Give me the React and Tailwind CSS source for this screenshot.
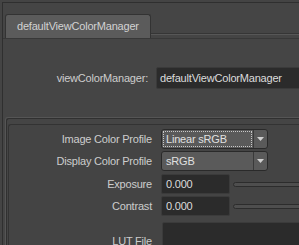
import React from 'react';

const font = { fontFamily: '"Liberation Sans", Arial, sans-serif' };

function Label({ children }) {
  return (
    <div className="w-[143px] shrink-0 pr-[0px] text-right text-[11px] tracking-[-0.2px] text-[#cdcdcd] leading-none">
      {children}
    </div>
  );
}

function Dropdown({ value, focused }) {
  return (
    <div className="ml-[9px] flex h-[20px] w-[107px] shrink-0 items-stretch rounded-[3px] border border-[#2a2a2a] bg-[#5a5a5a]">
      <div className="flex flex-1 items-center p-[1px]">
        <div
          className={
            'flex h-full w-full items-center pl-[2px] text-[11px] tracking-[-0.2px] text-[#e0e0e0] ' +
            (focused ? 'border border-dotted border-[#c8c8c8]' : 'border border-transparent')
          }
        >
          {value}
        </div>
      </div>
      <div className="w-[1px] bg-[#3a3a3a]" />
      <div className="flex w-[13px] items-center justify-center">
        <svg width="7" height="4" viewBox="0 0 7 4">
          <path d="M0 0 H7 L3.5 4 Z" fill="#cfcfcf" />
        </svg>
      </div>
    </div>
  );
}

function NumberField({ value }) {
  return (
    <div className="ml-[9px] flex shrink-0 items-center">
      <div className="flex h-[20px] w-[69px] items-center rounded-[2px] border border-[#3b3b3b] bg-[#2b2b2b] pl-[4px] text-[11px] tracking-[-0.2px] text-[#dcdcdc]">
        {value}
      </div>
      <div className="ml-[3px] h-[5px] w-[90px] rounded-[3px] border border-[#2c2c2c] bg-[#4e4e4e]" />
    </div>
  );
}

export default function App() {
  return (
    <div className="relative h-[245px] w-[299px] overflow-hidden bg-[#444444]" style={font}>
      <div className="ml-[2px] mt-[2px] h-[260px] border-l border-t border-[#2f2f2f] bg-[#454545]">
        {/* tab bar */}
        <div className="flex pl-[2px] pt-[11px]">
          <div className="flex h-[24px] w-[146px] shrink-0 items-center rounded-t-[3px] border border-b-0 border-[#333333] bg-[#5b5b5b] pl-[11px] text-[11px] tracking-[-0.2px] text-[#d2d2d2]">
            defaultViewColorManager
          </div>
          <div className="mt-[19px] h-[2px] flex-1 self-start border-t border-[#363636] bg-[#575757]" />
        </div>
        <div className="h-[1px] bg-[#383838]" />

        {/* node name */}
        <div className="h-[78px] pt-[28px]">
          <div className="flex items-center">
            <div className="w-[145px] shrink-0 text-right text-[11px] tracking-[-0.2px] text-[#cdcdcd]">
              viewColorManager:
            </div>
            <div className="ml-[8px] flex h-[22px] w-[160px] shrink-0 items-center rounded-[2px] border border-[#3a3a3a] bg-[#2b2b2b] pl-[3px] text-[11px] tracking-[-0.2px] text-[#dcdcdc]">
              defaultViewColorManager
            </div>
          </div>
        </div>

        {/* attribute frame */}
        <div className="ml-[2px] rounded-tl-[3px] border-l border-t border-[#555555]">
          <div className="rounded-tl-[3px] border-l border-t border-[#303030]">
            <div className="ml-[1px] mt-[5px] rounded-tl-[3px] border-l border-t border-[#333333] bg-[#444444] pt-[4px]">
              <div className="flex h-[20px] items-center">
                <Label>Image Color Profile</Label>
                <Dropdown value="Linear sRGB" focused />
              </div>
              <div className="mt-[2px] flex h-[20px] items-center">
                <Label>Display Color Profile</Label>
                <Dropdown value="sRGB" />
              </div>
              <div className="mt-[3px] flex h-[20px] items-center">
                <Label>Exposure</Label>
                <NumberField value="0.000" />
              </div>
              <div className="mt-[2px] flex h-[20px] items-center">
                <Label>Contrast</Label>
                <NumberField value="0.000" />
              </div>
              <div className="mt-[6px] flex h-[38px] items-center">
                <Label>LUT File</Label>
                <div className="ml-[10px] h-[38px] w-[150px] shrink-0 rounded-[2px] border border-[#3b3b3b] bg-[#2b2b2b]" />
              </div>
            </div>
          </div>
        </div>
      </div>
    </div>
  );
}
